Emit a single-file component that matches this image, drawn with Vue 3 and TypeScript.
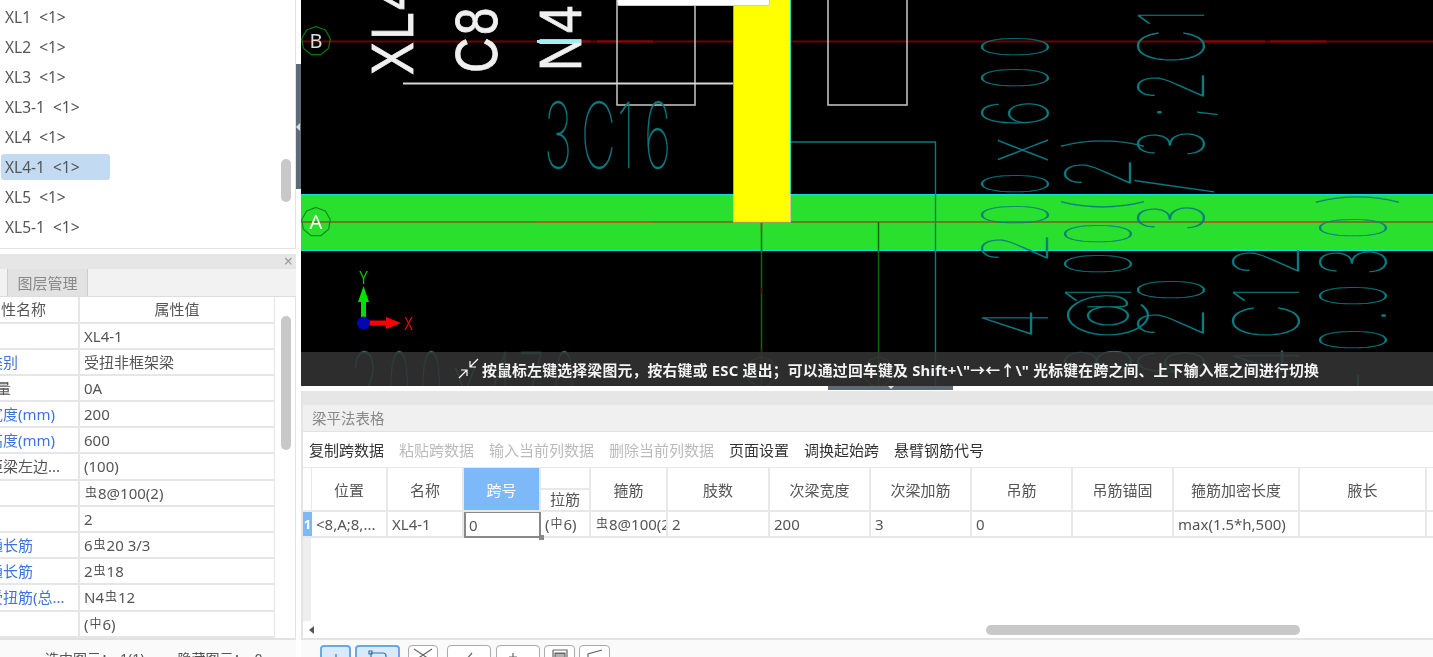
<template>
  <div class="app">
    <!-- left column: component list + property panel -->
    <aside class="side">
      <div class="list">
        <div v-for="item in listItems" :key="item" class="list-row">
          <span class="list-item" :class="{ active: item === 'XL4-1' }">{{ item }}&nbsp; &lt;1&gt;</span>
        </div>
        <div class="list-thumb"></div>
      </div>

      <div class="panel-head"><span class="close">×</span></div>
      <div class="tabs"><div class="tab">图层管理</div></div>

      <div class="props">
        <div class="props-table">
          <div class="prop-row prop-head">
            <div class="prop-name head-name">属性名称</div>
            <div class="prop-value head-value">属性值</div>
          </div>
          <div v-for="row in propRows" :key="row.name" class="prop-row">
            <div class="prop-name" :class="{ link: row.link }">
              <span :class="{ nudge: row.nudge }">{{ row.name }}</span>
            </div>
            <div class="prop-value">
              <template v-for="(part, i) in splitBars(row.value)" :key="i">
                <span v-if="part === '虫' || part === '中'" class="bar">{{ part }}</span>
                <template v-else>{{ part }}</template>
              </template>
            </div>
          </div>
        </div>
        <div class="props-track"><div class="props-thumb"></div></div>
      </div>

      <div class="status">
        <span class="status-a">选中图元：</span><span class="status-b">1(1)</span>
        <span class="status-c">隐藏图元：</span><span class="status-d">0</span>
      </div>
    </aside>

    <div class="splitter"><div class="splitter-handle"><i></i></div></div>

    <main class="main">
      <div class="canvas">
        <svg class="drawing" viewBox="301 0 1132 386" width="1132" height="386">
          <rect x="301" y="0" width="1132" height="386" fill="#000" />

          <!-- green beam -->
          <rect x="301" y="194" width="1132" height="56" fill="#2ae02e" />
          <line x1="301" y1="194.5" x2="1433" y2="194.5" stroke="#11dcdc" />
          <line x1="301" y1="250.5" x2="1433" y2="250.5" stroke="#11dcdc" />

          <!-- axis lines -->
          <line x1="301" y1="41.5" x2="1433" y2="41.5" stroke="#700000" stroke-width="2" />
          <line x1="537" y1="41.5" x2="590" y2="41.5" stroke="#8c0505" stroke-width="2" />
          <line x1="597" y1="41.5" x2="653" y2="41.5" stroke="#8c0505" stroke-width="2" />
          <line x1="1203" y1="41.5" x2="1265" y2="41.5" stroke="#8c0505" stroke-width="2" />
          <line x1="1270" y1="41.5" x2="1326" y2="41.5" stroke="#8c0505" stroke-width="2" />
          <line x1="301" y1="222" x2="1433" y2="222" stroke="#8a5a18" stroke-width="1.6" />
          <line x1="537" y1="222" x2="653" y2="222" stroke="#c05a1c" stroke-width="1.6" />
          <line x1="1203" y1="222" x2="1326" y2="222" stroke="#c05a1c" stroke-width="1.6" />
          <line x1="761.5" y1="222" x2="761.5" y2="386" stroke="#0a6a0a" stroke-width="1.5" />
          <line x1="878.5" y1="222" x2="878.5" y2="386" stroke="#0a6a0a" stroke-width="1.5" />
          <line x1="761.5" y1="222" x2="761.5" y2="231" stroke="#a04a14" stroke-width="1.5" />
          <line x1="761.5" y1="288" x2="761.5" y2="294" stroke="#7a0000" stroke-width="1.5" />
          <line x1="761.5" y1="349" x2="761.5" y2="356" stroke="#7a0000" stroke-width="1.5" />

          <!-- axis bubbles -->
          <polygon v-for="b in bubbles" :key="b.id" :points="b.points" fill="none" :stroke="b.stroke" stroke-width="1.2" />
          <text x="316" y="48" class="bubble-text" fill="#ddd">B</text>
          <text x="316" y="229" class="bubble-text" fill="#fff">A</text>

          <!-- white outlines -->
          <rect x="617" y="-4" width="78" height="109" fill="none" stroke="#bdbdbd" stroke-width="1.6" />
          <rect x="828" y="-4" width="79" height="109" fill="none" stroke="#bdbdbd" stroke-width="1.6" />
          <line x1="403" y1="83.5" x2="733" y2="83.5" stroke="#d8d8d8" stroke-width="1.8" />
          <polyline points="790,142 935.5,142 935.5,386" fill="none" stroke="#0b7b80" stroke-width="1.4" />

          <!-- column -->
          <rect x="733.5" y="-2" width="57" height="224" fill="#ffff00" stroke="#c8c8a8" />
          <line x1="733.5" y1="0" x2="733.5" y2="194" stroke="#11dcdc" />
          <line x1="790.5" y1="0" x2="790.5" y2="194" stroke="#11dcdc" />

          <!-- white annotation -->
          <text v-for="w in whiteText" :key="w.t" class="cad-white" :transform="`translate(${w.x} ${w.y}) rotate(-90) scale(.82 1)`">{{ w.t }}</text>
          <line x1="537" y1="41.5" x2="581" y2="41.5" stroke="#a8ecf8" stroke-width="3" />

          <!-- teal annotation, one glyph at a time so the spacing follows the drawing -->
          <text v-for="(g, i) in cadGlyphs" :key="i" class="cad" :transform="g.transform">{{ g.ch }}</text>

          <!-- axis gizmo -->
          <line x1="363.5" y1="322" x2="363.5" y2="298" stroke="#00e000" stroke-width="5" />
          <polygon points="363.5,286 369,302 358,302" fill="#00e000" />
          <line x1="364" y1="323" x2="388" y2="323" stroke="#ff0000" stroke-width="5" />
          <polygon points="401,323 386,317 386,329" fill="#ff0000" />
          <circle cx="363.5" cy="323" r="6.5" fill="#0606b0" />
          <text class="gizmo" fill="#00d000" transform="translate(363.5 284) scale(.72 .92)">Y</text>
          <text class="gizmo" fill="#f00000" transform="translate(408.5 330) scale(.72 1)">X</text>
        </svg>

        <div class="hint">
          <svg class="hint-icon" width="24" height="22" viewBox="0 0 24 22">
            <path d="M20 1 L12 9 M12 3 V9 H18" fill="none" stroke="#fff" stroke-width="1.2" />
            <path d="M1 20 L9 12 M3 12 H9 V18" fill="none" stroke="#fff" stroke-width="1.2" />
          </svg>
          <span>按鼠标左键选择梁图元，按右键或 ESC 退出；可以通过回车键及 Shift+\"→←↑\" 光标键在跨之间、上下输入框之间进行切换</span>
        </div>

        <div class="popup"></div>
      </div>

      <div class="strip"><div class="strip-handle"><i></i></div></div>

      <section class="sheet">
        <div class="sheet-top"></div>
        <div class="sheet-title">梁平法表格</div>
        <div class="sheet-tools">
          <span v-for="t in tools" :key="t.label" :class="{ off: t.off }">{{ t.label }}</span>
        </div>

        <div class="grid" :style="{ gridTemplateColumns: gridColumns }">
          <div class="th corner"></div>
          <div
            v-for="c in sheetColumns"
            :key="c.title"
            class="th"
            :class="{ current: c.title === '跨号', split: c.title === '拉筋' }"
          >
            <span>{{ c.title }}</span>
          </div>
          <div class="row-no">1</div>
          <div
            v-for="c in sheetColumns"
            :key="c.title + '-v'"
            class="td"
            :class="{ editing: c.title === '跨号' }"
          >
            <template v-for="(part, i) in splitBars(c.value)" :key="i">
              <span v-if="part === '虫' || part === '中'" class="bar">{{ part }}</span>
              <template v-else>{{ part }}</template>
            </template>
            <i v-if="c.title === '跨号'" class="handle"></i>
          </div>
        </div>

        <div class="fill"><div class="fill-gutter"></div></div>
        <div class="hscroll">
          <i class="arrow-left"></i>
          <div class="hscroll-thumb"></div>
        </div>
      </section>

      <div class="bottom">
        <button
          v-for="(b, i) in bottomButtons"
          :key="i"
          class="tool-btn"
          :class="{ on: b.on }"
          :style="{ width: b.w + 'px', marginLeft: b.gap + 'px' }"
        >
          <svg width="24" height="14" viewBox="0 0 24 14">
            <path :d="b.d" fill="none" :stroke="b.on ? '#3d6ea8' : '#666'" stroke-width="1.2" />
          </svg>
        </button>
      </div>
    </main>
  </div>
</template>

<script setup lang="ts">
const listItems = ['XL1', 'XL2', 'XL3', 'XL3-1', 'XL4', 'XL4-1', 'XL5', 'XL5-1']

const propRows = [
  { name: '名称', value: 'XL4-1' },
  { name: '结构类别', value: '受扭非框架梁', link: true },
  { name: '跨数量', value: '0A', nudge: true },
  { name: '截面宽度(mm)', value: '200', link: true },
  { name: '截面高度(mm)', value: '600', link: true },
  { name: '轴线距梁左边...', value: '(100)' },
  { name: '箍筋', value: '虫8@100(2)' },
  { name: '胶数', value: '2' },
  { name: '上部通长筋', value: '6虫20 3/3', link: true },
  { name: '下部通长筋', value: '2虫18', link: true },
  { name: '侧面受扭筋(总...', value: 'N4虫12', link: true },
  { name: '拉筋', value: '(中6)' }
]

// 把钢筋符号单独拆出来，符号字号更小
const splitBars = (text: string) => text.split(/(虫|中)/).filter(Boolean)

const tools = [
  { label: '复制跨数据' },
  { label: '粘贴跨数据', off: true },
  { label: '输入当前列数据', off: true },
  { label: '删除当前列数据', off: true },
  { label: '页面设置' },
  { label: '调换起始跨' },
  { label: '悬臂钢筋代号' }
]

const sheetColumns = [
  { title: '位置', width: 76, value: '<8,A;8,...' },
  { title: '名称', width: 76, value: 'XL4-1' },
  { title: '跨号', width: 77, value: '0' },
  { title: '拉筋', width: 50, value: '(中6)' },
  { title: '箍筋', width: 77, value: '虫8@100(2)' },
  { title: '肢数', width: 102, value: '2' },
  { title: '次梁宽度', width: 101, value: '200' },
  { title: '次梁加筋', width: 101, value: '3' },
  { title: '吊筋', width: 101, value: '0' },
  { title: '吊筋锚固', width: 101, value: '' },
  { title: '箍筋加密长度', width: 126, value: 'max(1.5*h,500)' },
  { title: '腋长', width: 127, value: '' },
  { title: '腋高', width: 100, value: '' }
]

const gridColumns = '9px ' + sheetColumns.map((c) => c.width + 'px').join(' ')

const bottomButtons = [
  { w: 31, gap: 19, on: true, d: 'M12 6 V14' },
  { w: 45, gap: 4, on: true, d: 'M5 5 H17 Q20 5 20 8 V14 M5 5 V14 M3 3 h3 v3 h-3 z' },
  { w: 30, gap: 8, d: 'M3 2 L21 14 M21 2 L3 14' },
  { w: 44, gap: 9, d: 'M8 14 L15 6' },
  { w: 44, gap: 5, d: 'M7 6 V14 M3 10 H11' },
  { w: 31, gap: 4, d: 'M5 3 H19 V14 M5 3 V14 M7 6 H17 V14 H7 Z M7 7 H17 M7 9 H17' },
  { w: 31, gap: 4, d: 'M5 14 V7 L19 3' }
]

const octagon = (cx: number, cy: number, r: number) =>
  Array.from({ length: 9 }, (_, i) => {
    const a = (i / 9) * Math.PI * 2 - Math.PI / 2
    return `${(cx + Math.cos(a) * r).toFixed(1)},${(cy + Math.sin(a) * r).toFixed(1)}`
  }).join(' ')

const bubbles = [
  { id: 'b', points: octagon(316, 41, 14.5), stroke: '#0a7a0a' },
  { id: 'a', points: octagon(316, 222, 14.5), stroke: '#0c8a1a' },
  { id: '8', points: octagon(761.5, 372, 15), stroke: '#0a6a0a' },
  { id: '9', points: octagon(878.5, 372, 15), stroke: '#0a6a0a' }
]

const whiteText = [
  { t: 'XL4', x: 413, y: 75 },
  { t: 'C8', x: 497, y: 73 },
  { t: 'N4', x: 581, y: 71 }
]

// [字符, 起始 y] —— 竖排标注，基线在 x
const rotated: { x: number; glyphs: [string, number][] }[] = [
  { x: 1048, glyphs: [['4', 338], ['2', 263], ['0', 226], ['0', 195], ['x', 162], ['6', 127], ['0', 89], ['0', 58]] },
  { x: 1131, glyphs: [[')', 150], ['2', 188], ['(', 213], ['0', 245], ['0', 275], ['1', 304], ['@', 339], ['8', 376]] },
  { x: 1204, glyphs: [['8', 1], ['1', 27], ['C', 64], ['2', 101], [';', 119], ['3', 158], ['/', 194], ['3', 232], ['0', 301], ['2', 338], ['6', 376]] },
  { x: 1299, glyphs: [['2', 276], ['1', 304], ['C', 339], ['4', 376]] },
  { x: 1386, glyphs: [[')', 206], ['0', 239], ['3', 276], ['0', 307], ['.', 322], ['0', 351], ['-', 392]] }
]

const flat: [string, number, number][] = [
  ['3', 544, 168], ['C', 581, 168], ['1', 617, 168], ['6', 644, 168],
  ['2', 350, 418], ['0', 388, 418], ['0', 420, 418], ['x', 453, 418], ['4', 485, 418], ['7', 518, 418], ['0', 553, 418]
]

// 0 在图纸字体里比其它数字窄
const squeeze = (ch: string) => (ch === '0' ? 0.42 : 0.53)

const cadGlyphs = [
  ...rotated.flatMap((col) =>
    col.glyphs.map(([ch, y]) => ({ ch, transform: `translate(${col.x} ${y}) rotate(-90) scale(${squeeze(ch)} 1)` }))
  ),
  ...flat.map(([ch, x, y]) => ({ ch, transform: `translate(${x} ${y}) scale(${squeeze(ch)} 1)` }))
]
</script>

<style>
html,
body {
  margin: 0;
  height: 100%;
  overflow: hidden;
  background: #fff;
}
</style>

<style scoped>
.app {
  display: flex;
  width: 1433px;
  height: 657px;
  overflow: hidden;
  background: #fff;
  color: #555;
  font-family: "Noto Sans", "Noto Sans CJK SC", sans-serif;
  font-size: 15px;
  filter: blur(0.4px);
}

/* left column */
.side {
  width: 296px;
  flex: none;
  display: flex;
  flex-direction: column;
}
.list {
  position: relative;
  height: 249px;
  padding-top: 2px;
  box-sizing: border-box;
  border-right: 1px solid #e2e2e2;
  border-bottom: 1px solid #e2e2e2;
}
.list-row {
  height: 30px;
  display: flex;
  align-items: center;
  padding-left: 1px;
}
.list-item {
  width: 109px;
  height: 26px;
  line-height: 27px;
  padding-left: 4px;
  box-sizing: border-box;
  border-radius: 3px;
  font-size: 15.5px;
}
.list-item.active {
  background: #c2daf2;
}
.list-thumb {
  position: absolute;
  left: 281px;
  top: 159px;
  width: 10px;
  height: 43px;
  border-radius: 5px;
  background: #c8c8c8;
}
.panel-head {
  margin-top: 5px;
  height: 15px;
  background: #e6e6e6;
  position: relative;
}
.close {
  position: absolute;
  right: 3px;
  top: -3px;
  font-size: 16px;
  line-height: 20px;
  color: #999;
}
.tabs {
  height: 28px;
  box-sizing: border-box;
  background: #f2f2f2;
  padding-left: 7px;
  border-bottom: 1px solid #ddd;
}
.tab {
  width: 81px;
  height: 27px;
  line-height: 29px;
  text-align: center;
  box-sizing: border-box;
  background: #e2e2e2;
  border-left: 1px solid #ccc;
  border-right: 1px solid #ccc;
  color: #888;
}
.props {
  height: 343px;
  display: flex;
  overflow: hidden;
  border-right: 1px solid #e2e2e2;
  border-bottom: 2px solid #e2e2e2;
  box-sizing: border-box;
}
.props-table {
  width: 275px;
  flex: none;
  border-right: 1px solid #e6e6e6;
  box-sizing: border-box;
  overflow: hidden;
}
.prop-row {
  display: flex;
  height: 26.2px;
  box-sizing: border-box;
  border-bottom: 2px solid #e6e6e6;
  line-height: 25px;
  white-space: nowrap;
}
.prop-head {
  height: 26.5px;
}
.prop-name {
  width: 80px;
  flex: none;
  box-sizing: border-box;
  border-right: 2px solid #e6e6e6;
  margin-left: 0;
  overflow: hidden;
  text-indent: -42px;
  color: #555;
}
.prop-name.link {
  color: #3f72e0;
}
.nudge {
  margin-left: 8px;
}
.head-name {
  text-indent: -14px;
}
.prop-value {
  flex: 1;
  padding-left: 4px;
  overflow: hidden;
}
.head-value {
  text-align: center;
  padding-left: 0;
}
.bar {
  font-size: 12px;
  position: relative;
  top: -2px;
  margin: 0 1px;
}
.props-track {
  flex: 1;
  position: relative;
}
.props-thumb {
  position: absolute;
  left: 6px;
  top: 19px;
  width: 10px;
  height: 134px;
  border-radius: 5px;
  background: #c8c8c8;
}
.status {
  flex: 1;
  display: flex;
  padding-top: 9px;
  background: #fafafa;
  white-space: nowrap;
  font-size: 14px;
  line-height: 20px;
  overflow: hidden;
}
.status-a {
  margin-left: 45px;
}
.status-b {
  margin-left: 5px;
}
.status-c {
  margin-left: 33px;
}
.status-d {
  margin-left: 7px;
}

/* splitter */
.splitter {
  width: 5px;
  flex: none;
  padding-top: 64px;
  box-sizing: border-box;
}
.splitter-handle {
  height: 125px;
  background: #5f6a78;
  display: flex;
  align-items: center;
}
.splitter-handle i {
  border: 4px solid transparent;
  border-left: 0;
  border-right: 4px solid #ddd;
}

/* right column */
.main {
  flex: 1;
  min-width: 0;
  display: flex;
  flex-direction: column;
}
.canvas {
  position: relative;
  height: 386px;
  flex: none;
  overflow: hidden;
  background: #000;
}
.drawing {
  display: block;
}
.popup {
  position: absolute;
  left: 316px;
  top: -3px;
  width: 153px;
  height: 9px;
  box-sizing: border-box;
  background: #fff;
  border: 1px solid #ccc;
  border-radius: 2px;
}
.bubble-text {
  font-family: "Noto Sans", sans-serif;
  font-size: 20px;
  text-anchor: middle;
}
.cad-white {
  font-family: "Liberation Sans", sans-serif;
  font-size: 60px;
  letter-spacing: 3px;
  fill: #f0f0f0;
  stroke: #f0f0f0;
  stroke-width: 0.8px;
}
.cad {
  font-family: Inter, sans-serif;
  font-weight: 100;
  font-size: 91px;
  fill: #0c7c82;
  stroke: #0c7c82;
  stroke-width: 0.3px;
}
.gizmo {
  font-family: "Liberation Sans", sans-serif;
  font-size: 19px;
  text-anchor: middle;
}
.hint {
  position: absolute;
  left: 0;
  right: 0;
  bottom: 0;
  height: 34px;
  display: flex;
  align-items: center;
  padding-left: 157px;
  box-sizing: border-box;
  background: rgba(52, 52, 52, 0.86);
  color: #f4f4f4;
  font-size: 14.8px;
  font-weight: 700;
  letter-spacing: 0.25px;
  white-space: nowrap;
}
.hint-icon {
  flex: none;
}
.strip {
  height: 5px;
  flex: none;
  padding-left: 527px;
  box-sizing: border-box;
}
.strip-handle {
  width: 125px;
  height: 4px;
  background: #5f6a78;
  display: flex;
  justify-content: center;
}
.strip-handle i {
  border: 3px solid transparent;
  border-bottom: 0;
  border-top: 3px solid #ddd;
}

.sheet {
  height: 249px;
  flex: none;
  display: flex;
  flex-direction: column;
  border-left: 2px solid #e4e4e4;
  border-bottom: 2px solid #e4e4e4;
  box-sizing: border-box;
  overflow: hidden;
}
.sheet-top {
  height: 14px;
  flex: none;
  background: #e6e6e6;
}
.sheet-title {
  height: 27px;
  flex: none;
  line-height: 27px;
  padding-left: 9px;
  font-size: 14.5px;
  color: #888;
  background: #f0f0f0;
  border-bottom: 1px solid #e2e2e2;
  box-sizing: border-box;
}
.sheet-tools {
  height: 36px;
  flex: none;
  display: flex;
  align-items: center;
  gap: 15px;
  padding-left: 6px;
  color: #333;
  white-space: nowrap;
  border-bottom: 1px solid #e8e8e8;
  box-sizing: border-box;
}
.sheet-tools .off {
  color: #bbb;
}
.grid {
  display: grid;
  grid-template-rows: 44px 26px;
  flex: none;
  white-space: nowrap;
}
.th,
.td {
  box-sizing: border-box;
  border-right: 2px solid #e8e8e8;
  border-bottom: 2px solid #e8e8e8;
}
.th {
  display: flex;
  align-items: center;
  justify-content: center;
}
.corner {
  border-right: 1px solid #e8e8e8;
}
.th.current {
  background: #7db8f8;
  color: #fff;
}
.th.split {
  position: relative;
  align-items: flex-end;
  padding-bottom: 1px;
}
.th.split::before {
  content: "";
  position: absolute;
  left: 0;
  right: 0;
  top: 20px;
  border-top: 2px solid #e8e8e8;
}
.td {
  position: relative;
  padding-left: 4px;
  line-height: 25px;
  overflow: hidden;
}
.td.editing {
  border: 2px solid #888;
  border-top-width: 1px;
  padding-left: 3px;
  line-height: 24px;
  overflow: visible;
  z-index: 2;
}
.handle {
  position: absolute;
  right: -5px;
  bottom: -4px;
  width: 5px;
  height: 5px;
  background: #888;
}
.row-no {
  background: #7db8f8;
  color: #fff;
  font-size: 13px;
  font-weight: 700;
  line-height: 25px;
  text-align: center;
  overflow: hidden;
  border-bottom: 2px solid #e8e8e8;
  box-sizing: border-box;
}
.fill {
  flex: 1;
  display: flex;
}
.fill-gutter {
  width: 8px;
  background: #eeeeee;
}
.hscroll {
  height: 17px;
  flex: none;
  display: flex;
  align-items: center;
}
.arrow-left {
  margin-left: 6px;
  border: 4px solid transparent;
  border-left: 0;
  border-right: 5px solid #555;
}
.hscroll-thumb {
  margin-left: 672px;
  width: 314px;
  height: 10px;
  border-radius: 5px;
  background: #c8c8c8;
}
.bottom {
  flex: 1;
  display: flex;
  align-items: flex-start;
  padding-top: 5px;
  background: #fafafa;
  overflow: hidden;
}
.tool-btn {
  flex: none;
  height: 22px;
  padding: 0;
  box-sizing: border-box;
  background: #fff;
  border: 1px solid #aaa;
  border-radius: 4px;
  display: flex;
  justify-content: center;
  padding-top: 1px;
}
.tool-btn.on {
  background: #d9ebfb;
  border: 2px solid #6aa6e8;
}
</style>
